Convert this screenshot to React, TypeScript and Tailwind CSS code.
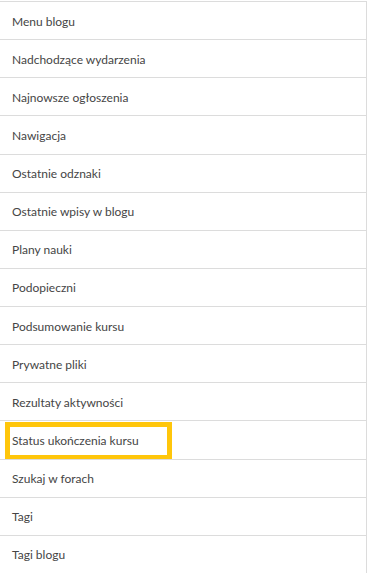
const items = [
  'Menu blogu',
  'Nadchodzące wydarzenia',
  'Najnowsze ogłoszenia',
  'Nawigacja',
  'Ostatnie odznaki',
  'Ostatnie wpisy w blogu',
  'Plany nauki',
  'Podopieczni',
  'Podsumowanie kursu',
  'Prywatne pliki',
  'Rezultaty aktywności',
  'Status ukończenia kursu',
  'Szukaj w forach',
  'Tagi',
  'Tagi blogu',
];

export default function App() {
  return (
    <div className="h-[573px] w-[377px] overflow-hidden bg-white pt-px font-['Lato',sans-serif]">
      <ul className="w-[367px] border-r border-[#dcdcdc]">
        {items.map((item) => (
          <li
            key={item}
            className="relative flex h-[38.14px] items-center border-t border-[#dcdcdc] pl-3 pt-[2px] text-[12px] text-[#454545]"
          >
            {item}
            {/* highlight box */}
            {item === 'Status ukończenia kursu' && (
              <div className="absolute left-[5px] top-[1px] h-[38px] w-[167px] border-[5px] border-[#ffc60b]" />
            )}
          </li>
        ))}
      </ul>
    </div>
  );
}
